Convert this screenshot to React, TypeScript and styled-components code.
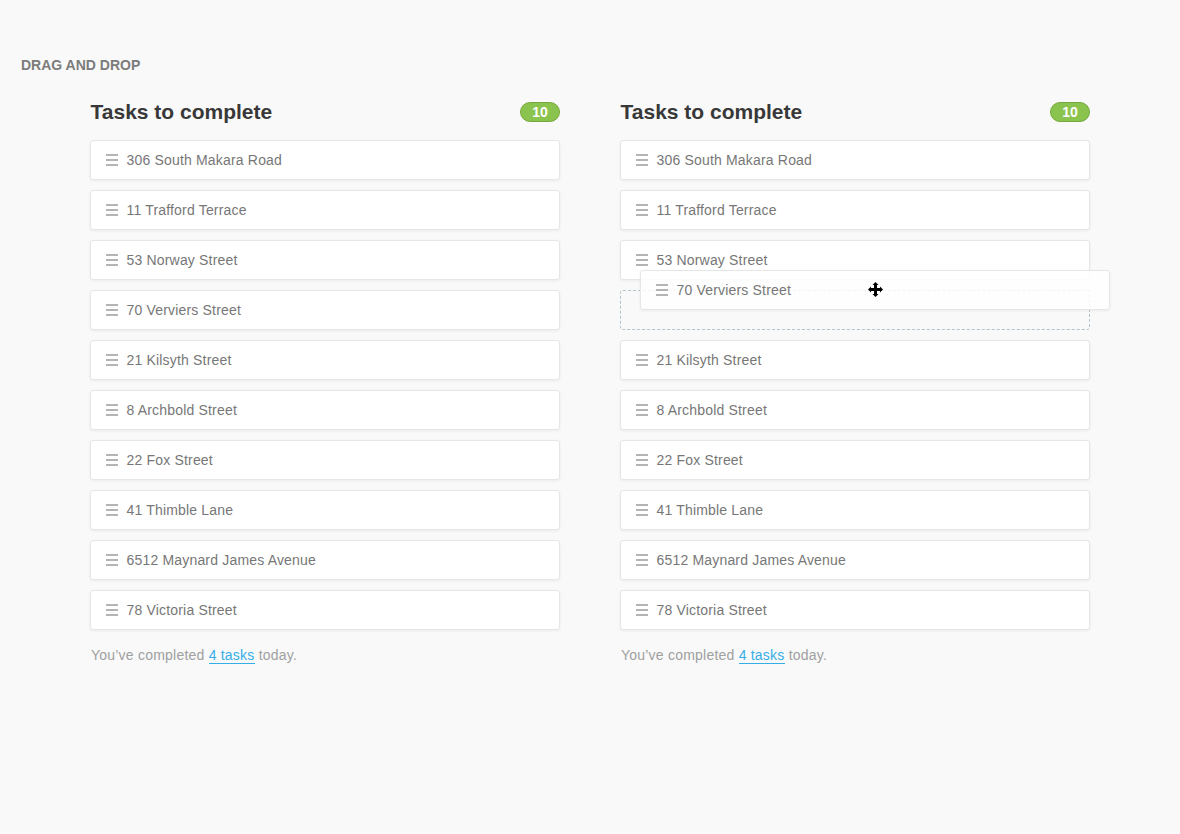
import React from "react";
import styled, { createGlobalStyle } from "styled-components";

const tasks = [
  "306 South Makara Road",
  "11 Trafford Terrace",
  "53 Norway Street",
  "70 Verviers Street",
  "21 Kilsyth Street",
  "8 Archbold Street",
  "22 Fox Street",
  "41 Thimble Lane",
  "6512 Maynard James Avenue",
  "78 Victoria Street",
];

const GlobalStyle = createGlobalStyle`
  html, body {
    margin: 0;
    padding: 0;
    height: 100%;
    background: #f9f9f9;
  }
  body {
    font-family: "Liberation Sans", Arial, sans-serif;
    -webkit-font-smoothing: antialiased;
  }
`;

const MoveCursor: React.FC = () => (
  <CursorIcon width="15" height="15" viewBox="0 0 15 15">
    <path
      d="M7.5 0 L10.5 3 L9 3 L9 6 L12 6 L12 4.5 L15 7.5 L12 10.5 L12 9 L9 9 L9 12 L10.5 12 L7.5 15 L4.5 12 L6 12 L6 9 L3 9 L3 10.5 L0 7.5 L3 4.5 L3 6 L6 6 L6 3 L4.5 3 Z"
      fill="#000"
    />
  </CursorIcon>
);

const TaskContent: React.FC<{ name: string }> = ({ name }) => (
  <>
    <Handle>
      <span />
      <span />
      <span />
    </Handle>
    <TaskName>{name}</TaskName>
  </>
);

const TaskColumn: React.FC<{ dragging?: boolean }> = ({ dragging }) => (
  <Column>
    <ColumnHeader>
      <Title>Tasks to complete</Title>
      <Badge>10</Badge>
    </ColumnHeader>
    <TaskList>
      {tasks.map((name) =>
        dragging && name === "70 Verviers Street" ? (
          <Placeholder key={name}>
            <DraggedTask>
              <TaskContent name={name} />
              <MoveCursor />
            </DraggedTask>
          </Placeholder>
        ) : (
          <Task key={name}>
            <TaskContent name={name} />
          </Task>
        )
      )}
    </TaskList>
    <Footer>
      You’ve completed <FooterLink href="#">4 tasks</FooterLink> today.
    </Footer>
  </Column>
);

const App: React.FC = () => (
  <Page>
    <GlobalStyle />
    <PageTitle>DRAG AND DROP</PageTitle>
    <Columns>
      <TaskColumn />
      <TaskColumn dragging />
    </Columns>
  </Page>
);

export default App;

const Page = styled.div`
  width: 1180px;
  height: 834px;
  padding: 57px 0 0 21px;
  box-sizing: border-box;
  overflow: hidden;
`;

const PageTitle = styled.h2`
  margin: 0;
  font-size: 14px;
  line-height: 16px;
  font-weight: 700;
  color: #7c7c7c;
`;

const Columns = styled.div`
  display: flex;
  gap: 60px;
  margin: 21px 0 0 69px;
`;

const Column = styled.section`
  width: 470px;
`;

const ColumnHeader = styled.div`
  display: flex;
  align-items: center;
  justify-content: space-between;
  height: 36px;
  margin-bottom: 10px;
`;

const Title = styled.h3`
  margin: 0 0 0 0.5px;
  font-size: 21px;
  line-height: 36px;
  font-weight: 700;
  color: #383838;
`;

const Badge = styled.span`
  width: 40px;
  height: 20px;
  box-sizing: border-box;
  border: 1px solid #76a83f;
  border-radius: 10px;
  background: #8bc34f;
  color: #fff;
  font-size: 14px;
  line-height: 18px;
  font-weight: 700;
  text-align: center;
`;

const TaskList = styled.div`
  display: flex;
  flex-direction: column;
  gap: 10px;
`;

const Task = styled.div`
  display: flex;
  align-items: center;
  height: 40px;
  box-sizing: border-box;
  padding-left: 15px;
  background: #fff;
  border: 1px solid #e6e6e6;
  border-radius: 3px;
  box-shadow: 0 1px 3px rgba(0, 0, 0, 0.06);
`;

const Placeholder = styled.div`
  position: relative;
  height: 40px;
  box-sizing: border-box;
  border: 1px dashed #b4c4cc;
  border-radius: 3px;
`;

const DraggedTask = styled(Task)`
  position: absolute;
  top: -21px;
  left: 19px;
  width: 470px;
  background: rgba(255, 255, 255, 0.82);
`;

const Handle = styled.div`
  display: flex;
  flex-direction: column;
  gap: 3px;
  width: 12px;
  margin-right: 8.5px;

  span {
    display: block;
    height: 2px;
    background: #b4b4b4;
  }
`;

const TaskName = styled.span`
  font-size: 14px;
  color: #777;
  letter-spacing: 0.18px;
`;

const CursorIcon = styled.svg`
  position: absolute;
  left: 226.5px;
  top: 11px;
`;

const Footer = styled.p`
  margin: 15px 0 0 1px;
  font-size: 14px;
  line-height: 20px;
  color: #a0a0a0;
  letter-spacing: 0.22px;
`;

const FooterLink = styled.a`
  color: #35aee8;
  text-decoration: none;
  border-bottom: 1px solid #35aee8;
`;
